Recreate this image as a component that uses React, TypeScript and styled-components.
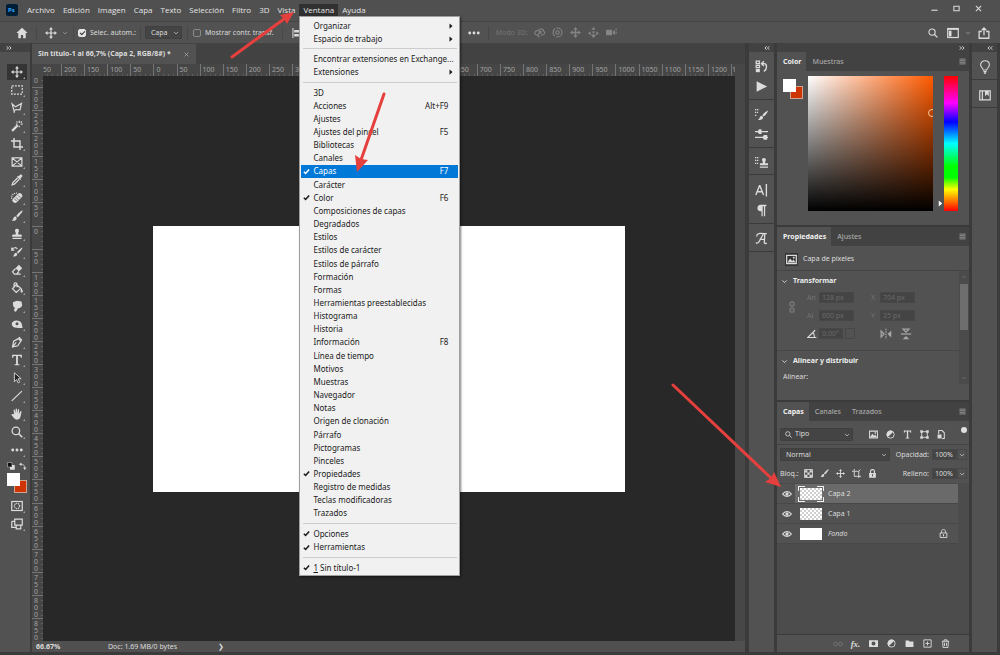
import React from "react";
import styled, { createGlobalStyle, css } from "styled-components";

const c = {
  panel: "#525252",
  bar: "#505050",
  dark: "#424242",
  line: "#3b3b3b",
  field: "#444444",
  text: "#dcdcdc",
  dim: "#a8a8a8",
  off: "#737373",
};

const Global = createGlobalStyle`
  * { box-sizing: border-box; }
  body { margin: 0; background: ${c.line}; }
  body, button, select, input {
    font-family: "Noto Sans", "Open Sans", sans-serif;
    font-size: 7px;
    line-height: 10px;
    color: ${c.text};
  }
  button { background: none; border: 0; padding: 0; margin: 0; }
  ul { list-style: none; margin: 0; padding: 0; }
`;

/* ---------- icons ---------- */

const Svg = styled.svg<{ $size?: number }>`
  display: block;
  flex: none;
  width: ${(p) => p.$size ?? 12}px;
  height: ${(p) => p.$size ?? 12}px;
  fill: none;
  stroke: currentColor;
  stroke-width: 1.6;
`;

const solid = { fill: "currentColor", stroke: "none" };

const shapes: Record<string, React.ReactNode> = {
  home: <path {...solid} d="M8 1 0.5 8H3v7h3.5v-4.5h3V15H13V8h2.5z" />,
  move: (
    <>
      <path d="M8 2v12M2 8h12" />
      <path {...solid} d="M8 0l2.6 3.4H5.400zM8 16l2.600-3.400H5.400zM0 8l3.400-2.600v5.200zM16 8l-3.400-2.600v5.200z" />
    </>
  ),
  marquee: <rect x="1" y="2.500" width="14" height="11" strokeDasharray="2.600 1.600" />,
  lasso: <path d="M1.500 2.500 6 6.500 14 2l-2 8.500-5-.5-3 1.500zM5 11.500c-1 1-1 2-.5 3" />,
  wand: (
    <>
      <path strokeWidth="3" d="M1.500 14.500 9 7" />
      <path d="M11 1v3M11 7.500v2M13 5.500h2.500M6.500 5.500h2M13 3.500l1.500-1.500M8.500 3.500 7.500 2" />
    </>
  ),
  crop: <path strokeWidth="1.900" d="M4 0v12h12M0 4h12v12" />,
  frame: <path d="M1.500 2.500h13v11h-13zM1.500 2.500l13 11M14.500 2.500l-13 11" />,
  dropper: (
    <>
      <path d="M9 5 2.500 11.500 1.500 14.500l3-1L11 7" />
      <path {...solid} d="M8 3.500 12.500 8l1-1-1-1 2-2c2-2-1-4.500-2.700-2.700L10 3 9 2.500z" />
    </>
  ),
  bandage: (
    <>
      <path strokeWidth="7" strokeLinecap="round" d="M5.500 11 11.500 5" />
      <path strokeDasharray="1.500 1.200" d="M1 9C0 4 4 1 8 1.500" />
      <path stroke="#525252" strokeWidth="1" d="M6.500 7l3.500 3.500M9.500 4.500l3 3M4.500 9l3 3" />
    </>
  ),
  brush: (
    <>
      <path {...solid} d="M15 .5C13 1 8.500 5.500 7 8l1.700 1.700C11 8 15 3 15.500 1z" />
      <path {...solid} d="M6.200 8.700c-2.200-.2-3 1.600-3.200 3-.2 1-1 1.800-2 2.300 2.500 1 6.300.5 6.700-3.500z" />
    </>
  ),
  stamp: <path {...solid} d="M8 1C5.500 1 4.800 3.300 5.700 5c.7 1.300.8 2 .6 3.500H3C1.800 8.500 1.500 9.500 1.500 11.500h13c0-2-.3-3-1.500-3H9.700C9.500 7 9.600 6.300 10.300 5c.9-1.700.2-4-2.300-4zM2 13h12v1.700H2z" />,
  history: (
    <>
      <path {...solid} d="M15.500 2C13 3 9 6.500 8 8.500l1.500 1.500c2-1.500 5.500-5.500 6-8zM7 9c-2 0-2.500 1.500-2.800 2.800-.2.900-1 1.500-1.700 1.900 2.500.8 5.500 0 6-3z" />
      <path d="M1 5.500C3 1.500 7 1.500 8.500 4M1 2v3.500h3.500" />
    </>
  ),
  eraser: (
    <>
      <path {...solid} d="M6 5.500 10.500 1 15 5.500 10.500 10z" />
      <path d="M6 6 2 10.500 4.500 13.500h3L10.500 10M4 13.500h9" />
    </>
  ),
  bucket: (
    <>
      <path d="M7 3.500 2 9l5 5 6-5.500zM4 7V3c0-2.500 4-2.500 4 0v4" />
      <path {...solid} d="M13.500 8c1.500 2 2.500 3.500 2.200 5-.3 1.500-2.700 1.500-3 0z" />
    </>
  ),
  smudge: <path {...solid} d="M2.500 3 8 1l6 1 1 5.500-3 3-2.500.5L6.500 15.500 4 14.500 5 10 3 8.500z" />,
  sponge: (
    <path {...solid} fillRule="evenodd" d="M1 8c0-6 11-6.500 13-1 .8 2.500 1 4.500 1.500 6-2 .8-5.500 0-8 0C3.500 13 1 11 1 8zm5-.5a1.800 1.800 0 1 0 4 0 1.800 1.800 0 1 0-4 0z" />
  ),
  pen: (
    <>
      <path d="M2 14.500 3.500 7 10 3.500 13 7l-4 6zM2 14.500l5-6" />
      <path strokeWidth="2" d="M10.500 1.500 14.500 6" />
    </>
  ),
  type: <path {...solid} d="M1.500 1h13v4h-1.300C13 3 12.500 2.500 11 2.500H9.200v10c0 1 .3 1.300 2 1.300V15H4.800v-1.200c1.700 0 2-.3 2-1.300v-10H5C3.500 2.500 3 3 2.800 5H1.500z" />,
  pathsel: <path fill="#222" strokeWidth="1.200" d="M4.500 1v12l3-3 2 4.500 2-1-2-4.500h4z" />,
  lineTool: <path d="M1 14.500 14.500 1.500" />,
  hand: <path {...solid} d="M4 8 3.500 3c0-1.200 1.500-1.200 1.700 0L6 7l.2-5.500c0-1.300 1.800-1.300 1.800 0L8.200 7l1-5c.2-1.200 1.800-1 1.700.3L10.500 8l1.800-3.500c.6-1 2-.5 1.600.7C13.500 7 13 12 11.500 14c-1.500 2-5.500 2-7 0L.8 9.500c-.7-1.200.8-2 1.700-1.200z" />,
  zoom: (
    <>
      <circle cx="6.500" cy="6.500" r="5" strokeWidth="1.700" />
      <path strokeWidth="2.200" d="M10 10l5 5" />
    </>
  ),
  dots: (
    <g {...solid}>
      <circle cx="2.300" cy="8" r="1.900" />
      <circle cx="8" cy="8" r="1.900" />
      <circle cx="13.700" cy="8" r="1.900" />
    </g>
  ),
  mask: (
    <>
      <rect x="1" y="2" width="14" height="12" />
      <circle cx="8" cy="8" r="3.500" strokeDasharray="1.500 1" />
    </>
  ),
  screen: <path d="M1 4.500h4M1 4.500v8h6M5 1.500h10v8H5zM7 9.500v5h6v-5" />,
  chevron: <path strokeWidth="1.800" d="M3 5.500l5 5 5-5" />,
  chevronUp: <path strokeWidth="1.800" d="M3 10.500l5-5 5 5" />,
  search: (
    <>
      <circle cx="6.500" cy="6.500" r="5" strokeWidth="1.800" />
      <path strokeWidth="2" d="M10.300 10.300 15 15" />
    </>
  ),
  workspace: (
    <>
      <rect x="1" y="2" width="14" height="12" />
      <path d="M1 3h14" />
      <path {...solid} d="M2.500 5h3.500v7.500H2.500z" />
    </>
  ),
  share: <path strokeWidth="1.700" d="M5 6H1.500v9h13V6H11M8 11V1.500M4.800 4.500 8 1.300l3.200 3.200" />,
  alignLeft: (
    <>
      <path d="M1.500 0v16" />
      <path {...solid} d="M3.500 3H15v4H3.500zM3.500 9.500H11v4H3.500z" />
    </>
  ),
  orbit: (
    <>
      <path d="M4 12C-1 10 1 5 6 5c1-3 8-3 8 1 3 2 1 6-4 6M8 9l-3 3 3 3" />
      <circle cx="9" cy="7.500" r="1.500" />
    </>
  ),
  roll: (
    <>
      <circle cx="8" cy="8" r="6.500" strokeDasharray="12 2" />
      <circle cx="8" cy="8" r="2.500" />
    </>
  ),
  pan: <path {...solid} d="M8 0l3 4H9v3h3V5l4 3-4 3V9H9v3h2l-3 4-3-4h2V9H4v2L0 8l4-3v2h3V4H5z" />,
  slide: <path {...solid} d="M8 0l3 4H5zM0 9l4-3v6zM16 9l-4-3v6zM8 16l-4-5h8zM6.500 6h3v3h-3z" />,
  camera: <path {...solid} d="M0 4h9v8H0zM10 7l3-3v8l-3-3zM14 2h1.500v3H14zM14 7h1.500v3H14z" />,
  actions: (
    <>
      <path d="M1.500 1.500h4v3h-4zM1.500 6.500h4v3h-4z" />
      <path {...solid} d="M1 11h5v4H1z" />
      <path strokeWidth="1.700" d="M9 4.500h2c4 0 4.500 6 0 9.500M11 1.500l-3 3 3 3" />
    </>
  ),
  play: <path {...solid} d="M2 1.500 15 8 2 14.500z" />,
  brushes: (
    <>
      <path d="M0 2h5M0 5.500h4M0 9h2.500" strokeDasharray="1.500 .8" />
      <path {...solid} d="M16 3c-3 1-6 4-7 6l1.500 1.500C13 9 15.500 5.500 16 3zM8.500 9.500c-2 0-2.500 1.500-3 3-.3 1-1 1.500-2 2 3 1 6.500 0 6.500-3z" />
    </>
  ),
  sliders: (
    <>
      <path strokeWidth="1.700" d="M0 4.500h16M0 11.500h16" />
      <path {...solid} d="M3 4.500 5 1.500h3v6H5zM9 11.500l2-3h4v6h-4z" />
    </>
  ),
  cloneSource: (
    <>
      <path d="M0 2h5M0 5.500h5M0 9h4" strokeDasharray="1.500 .8" />
      <path {...solid} d="M11 2.500c-2.500 0-2.700 2.200-2 3.500.6 1 .6 1.800.4 3H6v2.500h10V9h-3.400c-.2-1.200-.2-2 .4-3 .7-1.300.5-3.500-2-3.500zM6 12.800h10V14.500H6z" />
    </>
  ),
  character: <path strokeWidth="1.700" d="M1 13.500 5.500 2h.5l4.500 11.500M2.500 9.500H9M14 0v15.500" />,
  paragraph: <path {...solid} d="M7 1h7v1.700h-1.500V15H11V2.700H9.500V15H8V9C4 9 3 7 3 5s1.500-4 4-4z" />,
  glyphs: <path strokeWidth="1.600" d="M1 13.500c2.500 1 3.500-.5 4.500-2.500L10.500 2h1.500l-.5 11.500c1 .8 2 .8 3 0M5.500 9H12M2 5.500C2 1 6 1.500 12 2h2.500" />,
  bulb: <path strokeWidth="1.200" d="M6 11.500C6 9.500 3 8.500 3 5.500 3 2.500 5.200.8 8 .8s5 1.700 5 4.700c0 3-3 4-3 6zM6.200 13.300h3.600M6.800 15h2.400" />,
  library: (
    <>
      <path d="M1 2.500h14v12H1zM4.500 2.500v12" />
      <path {...solid} d="M8 2.500h5v7L10.500 7 8 9.500z" />
    </>
  ),
  burger: <path strokeWidth="2" d="M1 2.500h14M1 6.200h14M1 9.800h14M1 13.500h14" />,
  image: (
    <>
      <path strokeWidth="1.800" d="M1 2h14v12H1z" />
      <path {...solid} d="M2 12.500 6 6.500l3 3.500 2-2 3 4.500zM10 4h2.500v2.500H10z" />
    </>
  ),
  adjust: (
    <>
      <circle cx="8" cy="8" r="6.500" />
      <path {...solid} d="M12.600 3.400A6.500 6.500 0 0 0 3.400 12.600z" />
    </>
  ),
  shape: (
    <>
      <path d="M3 3h10v10H3z" />
      <path {...solid} d="M.5.5h4.500v4.500H.5zM11 .5h4.500v4.500H11zM.5 11h4.500v4.500H.5zM11 11h4.500v4.500H11z" />
    </>
  ),
  smart: (
    <>
      <path strokeWidth="1.800" d="M3 7V1h6l4 4v10H9" />
      <path {...solid} d="M1 8h7v7H1z" />
    </>
  ),
  checker: (
    <>
      <path d="M1 1h14v14H1z" />
      <path {...solid} d="M2 2h4v4H2zM10 2h4v4h-4zM6 6h4v4H6zM2 10h4v4H2zM10 10h4v4h-4z" />
    </>
  ),
  artboard: <path d="M4 0v3M0 4h12v12M12 4l3-3M4 4v9h12" />,
  lock: (
    <>
      <path strokeWidth="2" d="M4.500 7V4c0-4 7-4 7 0v3" />
      <path {...solid} fillRule="evenodd" d="M2 7h12v8.500H2zm5 2.500V13h2V9.500z" />
    </>
  ),
  lockOpen: (
    <>
      <path d="M4.500 7V4c0-4 7-4 7 0v3M2 7h12v8H2z" />
      <path {...solid} d="M7 9.500h2V13H7z" />
    </>
  ),
  eye: (
    <>
      <path strokeWidth="2" d="M1 8c3.500-5 10.500-5 14 0-3.500 5-10.500 5-14 0z" />
      <circle cx="8" cy="8" r="2.600" {...solid} />
    </>
  ),
  link: <path strokeWidth="1.600" d="M7 6C5 4 1 5 1 8s4 4 6 2M9 6c2-2 6-1 6 2s-4 4-6 2M5 8h6" />,
  chain: <path strokeWidth="2.200" d="M5.500 7V3.500c0-3 5-3 5 0V7M5.500 9v3.500c0 3 5 3 5 0V9M8 5v6" />,
  addMask: <path {...solid} fillRule="evenodd" d="M0 2h16v12H0zm8 2.500a3.500 3.500 0 1 0 0 7 3.500 3.500 0 1 0 0-7z" />,
  folder: <path {...solid} d="M1 2.500h5.500L8 4.500h7V14H1z" />,
  plus: <path strokeWidth="1.600" d="M1.500 1.500h13v13h-13zM8 4.500v7M4.500 8h7" />,
  trash: <path d="M1.500 4h13M5.500 4V1.500h5V4M3 4l.5 11h9L13 4M6.300 6.500v6M9.700 6.500v6" />,
  angle: <path strokeWidth="1.700" d="M13 2 1.500 13.500H15M9.500 6c2 2 2.500 4.500 2.500 7" />,
  flipH: (
    <>
      <path d="M8 1v14" strokeDasharray="2 1.300" />
      <path d="M1.500 4v8l4-4z" />
      <path {...solid} d="M15 3.500v9L10 8z" />
    </>
  ),
  flipV: (
    <>
      <path d="M1 8h14" />
      <path d="M4 1.500h8L8 5.500z" />
      <path {...solid} d="M3.500 15h9L8 10.500z" />
    </>
  ),
  swap: (
    <>
      <path strokeWidth="1.600" d="M4 4.500c5 0 7.500 2.500 7.500 7" />
      <path {...solid} d="M0 4.500 5 1v7zM11.500 16 8 11h7z" />
    </>
  ),
  defaults: (
    <>
      <path {...solid} d="M6 6h9.500v9.500H6z" />
      <path fill="#111" strokeWidth="1" d="M1 1h9v9H1z" />
    </>
  ),
  check: <path strokeWidth="3.600" d="M2 8.500 6 12.500 14 3.500" />,
  expand: <path strokeWidth="2.600" d="M2 3.500 6.500 8 2 12.500M9 3.500 13.500 8 9 12.500" />,
  collapse: <path strokeWidth="2.600" d="M7 3.500 2.500 8 7 12.500M14 3.500 9.500 8l4.500 4.500" />,
  triangle: <path {...solid} d="M4 1l8 7-8 7z" />,
  minimize: <path strokeWidth="2.600" d="M1 12h14" />,
  maximize: <path strokeWidth="2.400" d="M2 3h12v10H2z" />,
  close: <path strokeWidth="2.400" d="M2 2l12 12M14 2 2 14" />,
};

const Icon = ({ name, size }: { name: string; size?: number }) => (
  <Svg viewBox="0 0 16 16" $size={size} aria-hidden="true">
    {shapes[name]}
  </Svg>
);

/* ---------- frame ---------- */

const Page = styled.div`
  position: relative;
  display: flex;
  flex-direction: column;
  min-height: 100vh;
  padding-bottom: 3px;
  background: ${c.line};
  overflow: hidden;
`;

const MenuBar = styled.nav`
  display: flex;
  align-items: center;
  height: 21px;
  padding: 0 18px 1px 6px;
  background: ${c.bar};
`;

const Logo = styled.svg`
  width: 12px;
  height: 12px;
  margin-right: 5px;
`;

const MenuTitles = styled.ul`
  display: flex;
  flex: 1;
`;

const MenuTitle = styled.li`
  position: relative;
`;

const MenuTitleButton = styled.button<{ $open?: boolean }>`
  display: block;
  height: 12px;
  padding: 0 4px;
  font-family: "Open Sans", "Noto Sans", sans-serif;
  font-size: 8px;
  line-height: 12px;
  color: #e4e4e4;
  background: ${(p) => (p.$open ? "#303030" : "none")};
`;

const WindowButtons = styled.div`
  display: flex;
  align-items: center;
  gap: 14px;
  margin-bottom: 4px;
`;

const IconButton = styled.button<{ $w?: number; $h?: number; $tone?: string }>`
  display: flex;
  align-items: center;
  justify-content: center;
  flex: none;
  width: ${(p) => p.$w ?? 16}px;
  height: ${(p) => p.$h ?? 14}px;
  color: ${(p) => p.$tone ?? c.text};
`;

/* ---------- drop-down menu ---------- */

const Menu = styled.div`
  position: absolute;
  z-index: 10;
  top: 100%;
  left: 0;
  width: 161px;
  padding: 2px 1px 1px;
  border: 1px solid #9f9f9f;
  background: #f1f1f1;
  box-shadow: 1px 1px 2px rgba(0, 0, 0, 0.5);
`;

const MenuGroup = styled.div<{ $h: number }>`
  position: relative;
  display: grid;
  grid-template-columns: 100%;
  grid-auto-rows: 1fr;
  height: ${(p) => p.$h}px;

  &:not(:first-child) {
    margin-top: 7px;
  }

  &:not(:first-child)::before {
    content: "";
    position: absolute;
    top: -4px;
    left: 2px;
    right: 1px;
    height: 1px;
    background: #cdcdcd;
  }
`;

const MenuItem = styled.button<{ $active?: boolean }>`
  display: flex;
  align-items: center;
  padding: 0 10px 0 2px;
  font-size: 8px;
  line-height: 12px;
  text-align: left;
  color: ${(p) => (p.$active ? "#fff" : "#1a1a1a")};
  background: ${(p) => (p.$active ? "#0078d7" : "none")};
`;

const CheckSlot = styled.span`
  flex: none;
  width: 10px;
`;

const ItemLabel = styled.span`
  flex: 1;
  white-space: nowrap;
`;

const Submenu = styled.span`
  margin-right: -6px;
`;

type Entry = { label: React.ReactNode; keys?: string; on?: boolean; sub?: boolean; active?: boolean };
const names = (...list: string[]): Entry[] => list.map((label) => ({ label }));

const menuGroups: { h: number; items: Entry[] }[] = [
  { h: 26, items: [{ label: "Organizar", sub: true }, { label: "Espacio de trabajo", sub: true }] },
  { h: 27, items: [{ label: "Encontrar extensiones en Exchange..." }, { label: "Extensiones", sub: true }] },
  {
    h: 434,
    items: [
      { label: "3D" },
      { label: "Acciones", keys: "Alt+F9" },
      { label: "Ajustes" },
      { label: "Ajustes del pincel", keys: "F5" },
      ...names("Bibliotecas", "Canales"),
      { label: "Capas", keys: "F7", on: true, active: true },
      { label: "Carácter" },
      { label: "Color", keys: "F6", on: true },
      ...names(
        "Composiciones de capas", "Degradados", "Estilos", "Estilos de carácter", "Estilos de párrafo",
        "Formación", "Formas", "Herramientas preestablecidas", "Histograma", "Historia"
      ),
      { label: "Información", keys: "F8" },
      ...names(
        "Línea de tiempo", "Motivos", "Muestras", "Navegador", "Notas", "Origen de clonación",
        "Párrafo", "Pictogramas", "Pinceles"
      ),
      { label: "Propiedades", on: true },
      ...names("Registro de medidas", "Teclas modificadoras", "Trazados"),
    ],
  },
  { h: 27, items: [{ label: "Opciones", on: true }, { label: "Herramientas", on: true }] },
  { h: 13, items: [{ label: <><u>1</u> Sin título-1</>, on: true }] },
];

const WindowMenu = () => (
  <Menu role="menu">
    {menuGroups.map((g, i) => (
      <MenuGroup key={i} $h={g.h}>
        {g.items.map((it, j) => (
          <MenuItem key={j} role="menuitem" $active={it.active}>
            <CheckSlot>{it.on && <Icon name="check" size={7} />}</CheckSlot>
            <ItemLabel>{it.label}</ItemLabel>
            {it.keys}
            {it.sub && <Submenu><Icon name="triangle" size={6} /></Submenu>}
          </MenuItem>
        ))}
      </MenuGroup>
    ))}
  </Menu>
);

/* ---------- options bar ---------- */

const OptionsBar = styled.div`
  display: flex;
  align-items: center;
  height: 22px;
  padding: 0 4px 0 15px;
  border-top: 1px solid #454545;
  background: ${c.panel};
`;

const Divider = styled.span<{ $before: number; $after: number }>`
  width: 1px;
  height: 14px;
  margin: 0 ${(p) => p.$after}px 0 ${(p) => p.$before}px;
  background: #484848;
`;

const CheckLabel = styled.label`
  display: flex;
  align-items: center;
  gap: 4px;
  white-space: nowrap;
`;

const CheckBox = styled.input`
  appearance: none;
  width: 8px;
  height: 8px;
  margin: 0;
  border: 1px solid #8a8a8a;
  border-radius: 2px;

  &:checked {
    border-color: #e4e4e4;
    background: #e4e4e4;
  }

  &:checked::before {
    content: "";
    display: block;
    width: 2px;
    height: 4px;
    margin: 0 auto;
    border: solid #333;
    border-width: 0 1px 1px 0;
    transform: rotate(45deg);
  }
`;

const Picker = styled.span<{ $w?: number }>`
  position: relative;
  display: block;
  ${(p) => (p.$w ? css`flex: none; width: ${p.$w}px;` : css`flex: 1;`)}

  & > svg:last-child {
    position: absolute;
    right: 3px;
    top: 4px;
  }
`;

const PickerGlyph = styled.span`
  position: absolute;
  left: 5px;
  top: 3px;
`;

const Select = styled.select<{ $indent?: number }>`
  appearance: none;
  display: block;
  width: 100%;
  height: 13px;
  padding: 0 0 0 ${(p) => p.$indent ?? 5}px;
  border: 1px solid #3f3f3f;
  border-radius: 1px;
  background: ${c.field};
`;

const AlignGroup = styled.div`
  display: flex;
  justify-content: space-between;
  width: 166px;
  margin-right: 10px;
`;

const Row = styled.div<{ $gap?: number }>`
  display: flex;
  align-items: center;
  gap: ${(p) => p.$gap ?? 0}px;
`;

const Dim = styled.span`
  margin-right: 4px;
  color: ${c.off};
`;

const Grow = styled.span`
  flex: 1;
`;

/* ---------- workspace ---------- */

const Workspace = styled.main`
  display: flex;
  flex: 1;
  background: ${c.line};
`;

const Column = styled.div<{ $w: number; $gap: number }>`
  display: flex;
  flex-direction: column;
  flex: none;
  width: ${(p) => p.$w}px;
  margin-right: ${(p) => p.$gap}px;
`;

const ColumnTop = styled.div<{ $end?: boolean }>`
  display: flex;
  align-items: center;
  justify-content: ${(p) => (p.$end ? "flex-end" : "flex-start")};
  flex: none;
  height: 9px;
  padding: 0 4px 0 6px;
  background: ${c.dark};
`;

const ToolList = styled.div`
  display: flex;
  flex-direction: column;
  align-items: center;
  flex: 1;
  gap: 2px;
  padding: 12px 0 0 4px;
  background: ${c.panel};
`;

const Tool = styled.button<{ $on?: boolean }>`
  position: relative;
  display: flex;
  align-items: center;
  justify-content: center;
  width: 20px;
  height: 16px;
  background: ${(p) => (p.$on ? "#353535" : "none")};

  &::after {
    content: "";
    position: absolute;
    right: 2px;
    bottom: 1px;
    border: 1px solid;
    border-color: transparent ${c.dim} ${c.dim} transparent;
  }
`;

const ColorControls = styled.div`
  display: flex;
  flex-direction: column;
  gap: 3px;
  width: 20px;
  height: 36px;
  padding-top: 2px;
`;

const SwatchPair = styled.div`
  position: relative;
  flex: none;
  width: 20px;
  height: 20px;
`;

const Swatch = styled.button<{ $fill: string; $back?: boolean }>`
  position: absolute;
  width: 13px;
  height: 13px;
  background: ${(p) => p.$fill};
  ${(p) =>
    p.$back
      ? css`right: 0; bottom: 0; border: 1px solid #cfa394;`
      : css`left: 0; top: 0; z-index: 1; border: 1px solid #fff;`}
`;

const Swatches = () => (
  <SwatchPair>
    <Swatch $fill="#ffffff" aria-label="Color frontal" />
    <Swatch $fill="#cf3502" $back aria-label="Color de fondo" />
  </SwatchPair>
);

const tools = [
  "move", "marquee", "lasso", "wand", "crop", "frame", "dropper", "bandage", "brush", "stamp", "history",
  "eraser", "bucket", "smudge", "sponge", "pen", "type", "pathsel", "lineTool", "hand", "zoom", "dots",
];

const Document = styled.section`
  display: flex;
  flex-direction: column;
  flex: 1;
  min-width: 0;
  margin-right: 4px;
  background: #474747;
`;

const DocTabs = styled.div`
  display: flex;
  flex: none;
  height: 21px;
  padding-top: 1px;
  background: ${c.dark};
`;

const DocTab = styled.div`
  display: flex;
  align-items: center;
  justify-content: space-between;
  min-width: 164px;
  gap: 4px;
  padding: 0 7px 0 6px;
  font-weight: 700;
  white-space: nowrap;
  background: ${c.panel};
`;

const Stage = styled.div`
  display: grid;
  grid-template: 12px minmax(0, 1fr) / 11px minmax(0, 1fr);
  flex: 1;
  margin-right: 10px;
`;

const RulerCell = styled.span`
  overflow: hidden;
  white-space: nowrap;
  font-size: 7px;
  line-height: 7px;
  color: #a2a2a2;
`;

const RulerX = styled.div`
  display: grid;
  grid-template-columns: 18px repeat(29, minmax(0, 1fr)) 4px;
  overflow: hidden;
  background: #464646;

  ${RulerCell} {
    padding: 2px 0 0 2px;
    border-left: 1px solid #747474;
    background: repeating-linear-gradient(90deg, transparent 0 4px, #5f5f5f 4px 5px) bottom / 100% 2px no-repeat;
  }

  ${RulerCell}:first-child {
    padding-left: 0;
    border: 0;
  }

  ${RulerCell}:last-child {
    padding-left: 0;
  }
`;

const RulerY = styled.div`
  display: grid;
  grid-template-rows: 11px repeat(24, minmax(0, 1fr));
  overflow: hidden;
  background: #464646;

  ${RulerCell} {
    padding: 1px 5px 0 2px;
    border-top: 1px solid #747474;
    word-break: break-all;
    white-space: normal;
    background: repeating-linear-gradient(180deg, transparent 0 4px, #5f5f5f 4px 5px) right / 2px 100% no-repeat;
  }

  ${RulerCell}:first-child {
    border: 0;
  }
`;

const Canvas = styled.div`
  display: flex;
  align-items: center;
  justify-content: center;
  background: #282828;
`;

const Sheet = styled.div`
  width: 472px;
  height: 266px;
  background: #fff;
`;

const Status = styled.footer`
  display: flex;
  align-items: center;
  flex: none;
  height: 11px;
  padding-left: 4px;
  background: ${c.bar};
`;

const Zoom = styled.span`
  width: 28px;
  margin-right: 44px;
  font-weight: 700;
`;

const DocInfo = styled.span`
  width: 110px;
`;

const IconStrip = styled.div`
  display: flex;
  flex-direction: column;
  flex: 1;
  background: ${c.panel};
`;

const IconGroup = styled.div<{ $h: number }>`
  display: flex;
  flex-direction: column;
  align-items: center;
  justify-content: center;
  gap: 6px;
  height: ${(p) => p.$h}px;
  padding-top: 2px;
  border-bottom: 1px solid ${c.line};
`;

/* ---------- panels ---------- */

const Panel = styled.section<{ $h?: number }>`
  display: flex;
  flex-direction: column;
  ${(p) => (p.$h ? css`flex: none; height: ${p.$h}px; margin-bottom: 2px;` : css`flex: 1;`)}
  background: ${c.panel};
`;

const TabRow = styled.div`
  display: flex;
  align-items: stretch;
  flex: none;
  height: 19px;
  padding-right: 3px;
  background: ${c.dark};
`;

const Tab = styled.button<{ $on?: boolean }>`
  padding: 0 5px 0 6px;
  font-weight: ${(p) => (p.$on ? 700 : 500)};
  color: ${(p) => (p.$on ? "#f0f0f0" : c.dim)};
  background: ${(p) => (p.$on ? c.panel : "none")};
`;

const PanelTabs = ({ items }: { items: string[] }) => (
  <TabRow role="tablist">
    {items.map((t, i) => (
      <Tab key={t} role="tab" $on={i === 0}>{t}</Tab>
    ))}
    <Grow />
    <IconButton $w={8} $h={19} $tone="#9a9a9a" aria-label="Menú del panel"><Icon name="burger" size={7} /></IconButton>
  </TabRow>
);

const ColorBody = styled.div`
  display: flex;
  flex: 1;
  padding: 5px 11px 0 6px;
`;

const ColorSwatches = styled.div`
  width: 25px;
  padding-top: 3px;
`;

const Field = styled.div`
  position: relative;
  flex: 1;
  height: 135px;
  overflow: hidden;
  background: linear-gradient(to top, #000, transparent), linear-gradient(to right, #fff, #ff5a00);
`;

const Picked = styled.span`
  position: absolute;
  right: -3px;
  top: 33px;
  width: 8px;
  height: 8px;
  border: 1px solid #f3c9a0;
  border-radius: 50%;
`;

const Hue = styled.div`
  position: relative;
  width: 14px;
  height: 135px;
  margin-left: 11px;
  background: linear-gradient(#f00 0, #f0f 20%, #00f 34%, #0ff 50%, #0f0 67%, #0f0 75%, #ff0 84%, #f00 100%);
`;

const HueMark = styled.span`
  position: absolute;
  right: 100%;
  top: 124px;
  color: #fff;
`;

const LayerKind = styled.div`
  display: flex;
  align-items: center;
  gap: 5px;
  flex: none;
  height: 25px;
  padding: 2px 0 0 8px;
  border-bottom: 1px solid #454545;
`;

const KindIcon = styled.span`
  padding: 1px;
  background: #333;
`;

const Scroller = styled.div`
  display: flex;
  margin-bottom: 18px;
`;

const PropsBody = styled.div`
  flex: 1;
`;

const ScrollTrack = styled.div`
  display: flex;
  flex-direction: column;
  align-items: center;
  justify-content: space-between;
  width: 10px;
  padding: 3px 0;
  background: #4b4b4b;
  color: #777;
`;

const Thumb = styled.div`
  width: 8px;
  height: 46px;
  margin-bottom: 42px;
  background: #6e6e6e;
`;

const Heading = styled.h3`
  display: flex;
  align-items: center;
  gap: 5px;
  margin: 0;
  padding: 4px 0 0 4px;
  font-size: 7px;
  line-height: 12px;
  color: #ececec;
`;

const Transform = styled.div`
  display: flex;
  gap: 9px;
  height: 64px;
  padding: 5px 0 0 9px;
  border-bottom: 1px solid #464646;
  color: ${c.off};
`;

const ChainSlot = styled.div`
  padding-top: 9px;
`;

const FieldGrid = styled.div`
  display: grid;
  grid-template-columns: 12px 52px 9px 35px;
  grid-auto-rows: 11px;
  row-gap: 7px;
  align-items: center;
`;

const NumberBox = styled.input<{ $w: number; $live?: boolean }>`
  width: ${(p) => p.$w}px;
  height: 11px;
  padding: 0 2px;
  border: 1px solid #474747;
  background: ${c.field};
  color: ${(p) => (p.$live ? c.text : "#6a6a6a")};
`;

const AngleIcon = styled.span`
  color: ${c.text};
`;

const Flips = styled.span`
  display: flex;
  grid-column: span 2;
  gap: 8px;
  padding-left: 9px;
  color: ${c.dim};
`;

const AlignText = styled.div`
  padding: 5px 0 2px 6px;
`;

const FilterRow = styled.div`
  display: flex;
  align-items: center;
  flex: none;
  height: 24px;
  padding: 3px 2px 0 3px;
  border-bottom: 1px solid #454545;
`;

const FilterIcons = styled.div`
  display: flex;
  flex: 1;
  margin-left: 12px;
`;

const FilterDot = styled.button`
  width: 6px;
  height: 6px;
  margin-bottom: 8px;
  border-radius: 50%;
  background: #e0e0e0;
`;

const BlendRow = styled.div`
  display: flex;
  align-items: center;
  flex: none;
  height: 19px;
  padding: 0 2px 0 3px;
`;

const LockIcons = styled.div`
  display: flex;
  flex: 1;
  margin-left: 2px;
`;

const Amount = styled.label`
  display: flex;
  align-items: center;
  margin-left: 6px;
`;

const AmountName = styled.span`
  margin-right: 3px;
`;

const Stepper = styled.button`
  display: flex;
  align-items: center;
  justify-content: center;
  width: 10px;
  height: 11px;
  border: 1px solid #474747;
`;

const LayerList = styled.ul`
  flex: 1;
  padding: 1px 11px 0 0;
  background: #4c4c4c;
`;

const Layer = styled.li<{ $on?: boolean }>`
  display: flex;
  align-items: center;
  height: 20px;
  padding-right: 10px;
  border-bottom: 1px solid #474747;
  background: linear-gradient(90deg, ${c.panel} 18px, ${(p) => (p.$on ? "#6a6a6a" : c.panel)} 18px);
`;

const bracket = (dir: string, reach: number) =>
  `linear-gradient(${dir}, #f0f0f0 ${reach}px, transparent ${reach}px calc(100% - ${reach}px), #f0f0f0 calc(100% - ${reach}px))`;

const Thumbnail = styled.span<{ $frame?: boolean; $clear?: boolean }>`
  margin: 0 4px 0 1px;
  padding: 2px;
  ${(p) =>
    p.$frame &&
    css`
      background:
        ${bracket("90deg", 7)} top / 100% 1px no-repeat,
        ${bracket("90deg", 7)} bottom / 100% 1px no-repeat,
        ${bracket("180deg", 5)} left / 1px 100% no-repeat,
        ${bracket("180deg", 5)} right / 1px 100% no-repeat;
    `}

  &::before {
    content: "";
    display: block;
    width: 22px;
    height: 12px;
    background: ${(p) => (p.$clear ? "repeating-conic-gradient(#cfcfcf 0 25%, #fff 0 50%) 0 0 / 4px 4px" : "#fff")};
  }
`;

const LayerName = styled.span<{ $italic?: boolean }>`
  flex: 1;
  font-style: ${(p) => (p.$italic ? "italic" : "normal")};
`;

const LayerFooter = styled.div`
  display: flex;
  align-items: center;
  justify-content: flex-end;
  gap: 1px;
  flex: none;
  height: 18px;
  padding-right: 15px;
  border-top: 1px solid ${c.line};
`;

const Fx = styled.span`
  font: italic 700 9px "Liberation Serif", serif;
`;

const Arrows = styled.svg`
  position: absolute;
  z-index: 20;
  top: 0;
  left: 0;
  width: 1000px;
  height: 655px;
  pointer-events: none;
  fill: #e5403d;
  stroke: #e5403d;
  stroke-width: 3;
  stroke-linecap: round;
`;

const menus = ["Archivo", "Edición", "Imagen", "Capa", "Texto", "Selección", "Filtro", "3D", "Vista", "Ventana", "Ayuda"];
const layers = [
  { name: "Capa 2", clear: true, on: true },
  { name: "Capa 1", clear: true },
  { name: "Fondo", locked: true },
];
const xMarks = ["50", ...Array.from({ length: 29 }, (_, i) => String(Math.abs(i * 50 - 200))), "1"];
const yMarks = ["0", ...Array.from({ length: 24 }, (_, i) => String(Math.abs(i * 50 - 300)))];

const AmountField = ({ name }: { name: string }) => (
  <Amount>
    <AmountName>{name}</AmountName>
    <NumberBox $w={25} $live defaultValue="100%" />
    <Stepper aria-label={name}><Icon name="chevron" size={6} /></Stepper>
  </Amount>
);

export default function App() {
  return (
    <Page>
      <Global />
      <MenuBar>
        <Logo viewBox="0 0 12 12">
          <rect width="12" height="12" rx="2" fill="#001e36" />
          <text x="2" y="8" fontSize="6" fontWeight="700" fill="#31a8ff">Ps</text>
        </Logo>
        <MenuTitles>
          {menus.map((m) => (
            <MenuTitle key={m}>
              <MenuTitleButton $open={m === "Ventana"}>{m}</MenuTitleButton>
              {m === "Ventana" && <WindowMenu />}
            </MenuTitle>
          ))}
        </MenuTitles>
        <WindowButtons>
          <IconButton $w={8} aria-label="Minimizar"><Icon name="minimize" size={7} /></IconButton>
          <IconButton $w={8} aria-label="Maximizar"><Icon name="maximize" size={7} /></IconButton>
          <IconButton $w={8} aria-label="Cerrar"><Icon name="close" size={7} /></IconButton>
        </WindowButtons>
      </MenuBar>

      <OptionsBar>
        <IconButton $w={14} aria-label="Inicio"><Icon name="home" /></IconButton>
        <Divider $before={7} $after={7} />
        <IconButton $w={14} aria-label="Mover"><Icon name="move" /></IconButton>
        <IconButton $w={14} $tone={c.dim} aria-label="Ajustes de herramienta"><Icon name="chevron" size={6} /></IconButton>
        <Divider $before={1} $after={4} />
        <CheckLabel><CheckBox type="checkbox" defaultChecked />Selec. autom.:</CheckLabel>
        <Divider $before={4} $after={4} />
        <Picker $w={37}>
          <Select aria-label="Selección automática"><option>Capa</option></Select>
          <Icon name="chevron" size={6} />
        </Picker>
        <Divider $before={5} $after={5} />
        <CheckLabel><CheckBox type="checkbox" />Mostrar contr. transf.</CheckLabel>
        <Divider $before={8} $after={9} />
        <AlignGroup>
          {[0, 1, 2, 3, 4, 5, 6].map((i) => <Icon key={i} name="alignLeft" size={10} />)}
        </AlignGroup>
        <IconButton $w={12} aria-label="Más opciones"><Icon name="dots" /></IconButton>
        <Divider $before={8} $after={7} />
        <Dim>Modo 3D:</Dim>
        <Row $gap={2}>
          {["orbit", "roll", "pan", "slide", "camera"].map((n) => (
            <IconButton key={n} $tone="#858585" aria-label={n}><Icon name={n} size={11} /></IconButton>
          ))}
        </Row>
        <Grow />
        <IconButton $w={18} aria-label="Buscar"><Icon name="search" size={10} /></IconButton>
        <IconButton $w={22} aria-label="Espacio de trabajo"><Icon name="workspace" size={12} /></IconButton>
        <IconButton $w={8} $tone={c.dim} aria-label="Elegir espacio"><Icon name="chevron" size={6} /></IconButton>
        <IconButton $w={24} aria-label="Compartir"><Icon name="share" size={12} /></IconButton>
      </OptionsBar>

      <Workspace>
        <Column $w={30} $gap={2}>
          <ColumnTop><Icon name="expand" size={6} /></ColumnTop>
          <ToolList>
            {tools.map((t, i) => (
              <Tool key={t} $on={i === 0} aria-label={t}><Icon name={t} /></Tool>
            ))}
            <ColorControls>
              <Row $gap={4}>
                <Icon name="defaults" size={8} />
                <Icon name="swap" size={8} />
              </Row>
              <Swatches />
            </ColorControls>
            <Tool aria-label="Máscara rápida"><Icon name="mask" /></Tool>
            <Tool aria-label="Modo de pantalla"><Icon name="screen" /></Tool>
          </ToolList>
        </Column>

        <Document>
          <DocTabs>
            <DocTab>
              Sin título-1 al 66,7% (Capa 2, RGB/8#) *
              <IconButton $w={6} $tone={c.dim} aria-label="Cerrar documento"><Icon name="close" size={5} /></IconButton>
            </DocTab>
          </DocTabs>
          <Stage>
            <span />
            <RulerX>{xMarks.map((m, i) => <RulerCell key={i}>{m}</RulerCell>)}</RulerX>
            <RulerY>{yMarks.map((m, i) => <RulerCell key={i}>{m}</RulerCell>)}</RulerY>
            <Canvas><Sheet /></Canvas>
          </Stage>
          <Status>
            <Zoom>66.67%</Zoom>
            <DocInfo>Doc: 1.69 MB/0 bytes</DocInfo>
            ❯
          </Status>
        </Document>

        <Column $w={25} $gap={3}>
          <ColumnTop $end><Icon name="collapse" size={6} /></ColumnTop>
          <IconStrip>
            {[
              { h: 48, icons: ["actions", "play"] },
              { h: 48, icons: ["brushes", "sliders"] },
              { h: 27, icons: ["cloneSource"] },
              { h: 49, icons: ["character", "paragraph"] },
              { h: 28, icons: ["glyphs"] },
            ].map((g) => (
              <IconGroup key={g.icons[0]} $h={g.h}>
                {g.icons.map((n) => <IconButton key={n} aria-label={n}><Icon name={n} size={13} /></IconButton>)}
              </IconGroup>
            ))}
          </IconStrip>
        </Column>

        <Column $w={192} $gap={3}>
          <ColumnTop $end><Icon name="expand" size={6} /></ColumnTop>
          <Panel $h={173}>
            <PanelTabs items={["Color", "Muestras"]} />
            <ColorBody>
              <ColorSwatches><Swatches /></ColorSwatches>
              <Field><Picked /></Field>
              <Hue><HueMark><Icon name="triangle" size={7} /></HueMark></Hue>
            </ColorBody>
          </Panel>

          <Panel $h={173}>
            <PanelTabs items={["Propiedades", "Ajustes"]} />
            <LayerKind><KindIcon><Icon name="image" size={11} /></KindIcon>Capa de píxeles</LayerKind>
            <Scroller>
              <PropsBody>
                <Heading><Icon name="chevron" size={7} />Transformar</Heading>
                <Transform>
                  <ChainSlot><Icon name="chain" /></ChainSlot>
                  <FieldGrid>
                    <label htmlFor="w">An</label><NumberBox id="w" $w={35} defaultValue="128 px" />
                    <label htmlFor="x">X</label><NumberBox id="x" $w={35} defaultValue="704 px" />
                    <label htmlFor="h">Al</label><NumberBox id="h" $w={35} defaultValue="600 px" />
                    <label htmlFor="y">Y</label><NumberBox id="y" $w={35} defaultValue="25 px" />
                    <AngleIcon><Icon name="angle" size={10} /></AngleIcon>
                    <Row $gap={2}><NumberBox $w={24} aria-label="Ángulo" defaultValue="0.00°" /><Stepper aria-label="Elegir ángulo" /></Row>
                    <Flips><Icon name="flipH" /><Icon name="flipV" /></Flips>
                  </FieldGrid>
                </Transform>
                <Heading><Icon name="chevron" size={7} />Alinear y distribuir</Heading>
                <AlignText>Alinear:</AlignText>
              </PropsBody>
              <ScrollTrack>
                <Icon name="chevronUp" size={6} />
                <Thumb />
                <Icon name="chevron" size={6} />
              </ScrollTrack>
            </Scroller>
          </Panel>

          <Panel>
            <PanelTabs items={["Capas", "Canales", "Trazados"]} />
            <FilterRow>
              <Picker $w={73}>
                <Select $indent={14} aria-label="Filtrar capas"><option>Tipo</option></Select>
                <PickerGlyph><Icon name="search" size={7} /></PickerGlyph>
                <Icon name="chevron" size={6} />
              </Picker>
              <FilterIcons>
                {["image", "adjust", "type", "shape", "smart"].map((n) => (
                  <IconButton key={n} $w={17} aria-label={n}><Icon name={n} size={9} /></IconButton>
                ))}
              </FilterIcons>
              <FilterDot aria-label="Activar filtro" />
            </FilterRow>
            <BlendRow>
              <Picker>
                <Select aria-label="Modo de fusión"><option>Normal</option></Select>
                <Icon name="chevron" size={6} />
              </Picker>
              <AmountField name="Opacidad:" />
            </BlendRow>
            <BlendRow>
              Bloq.:
              <LockIcons>
                {["checker", "brush", "move", "artboard", "lock"].map((n) => (
                  <IconButton key={n} aria-label={n}><Icon name={n} size={9} /></IconButton>
                ))}
              </LockIcons>
              <AmountField name="Relleno:" />
            </BlendRow>
            <LayerList>
              {layers.map((l) => (
                <Layer key={l.name} $on={l.on}>
                  <IconButton $w={20} aria-label="Visibilidad"><Icon name="eye" size={10} /></IconButton>
                  <Thumbnail $frame={l.on} $clear={l.clear} />
                  <LayerName $italic={l.locked}>{l.name}</LayerName>
                  {l.locked && <Icon name="lockOpen" size={9} />}
                </Layer>
              ))}
            </LayerList>
            <LayerFooter>
              <IconButton $w={17} $tone={c.off} aria-label="Enlazar"><Icon name="link" size={10} /></IconButton>
              <IconButton $w={17} aria-label="Efectos"><Fx>fx.</Fx></IconButton>
              {["addMask", "adjust", "folder", "plus", "trash"].map((n) => (
                <IconButton key={n} $w={17} aria-label={n}><Icon name={n} size={9} /></IconButton>
              ))}
            </LayerFooter>
          </Panel>
        </Column>

        <Column $w={25} $gap={3}>
          <ColumnTop $end><Icon name="collapse" size={6} /></ColumnTop>
          <IconStrip>
            <IconGroup $h={28}><IconButton aria-label="Aprender"><Icon name="bulb" size={14} /></IconButton></IconGroup>
            <IconGroup $h={28}><IconButton aria-label="Bibliotecas"><Icon name="library" size={12} /></IconButton></IconGroup>
          </IconStrip>
        </Column>
      </Workspace>

      <Arrows viewBox="0 0 1000 655" aria-hidden="true">
        <path d="M232 57 284 19" />
        <path stroke="none" d="M294 12 280 15 284 19 287 24z" />
        <path d="M384 94 361 160" />
        <path stroke="none" d="M357 172 355 155 361 159 368 160z" />
        <path d="M673 385 771 478" />
        <path stroke="none" d="M781 487 765 482 771 478 774 472z" />
      </Arrows>
    </Page>
  );
}
